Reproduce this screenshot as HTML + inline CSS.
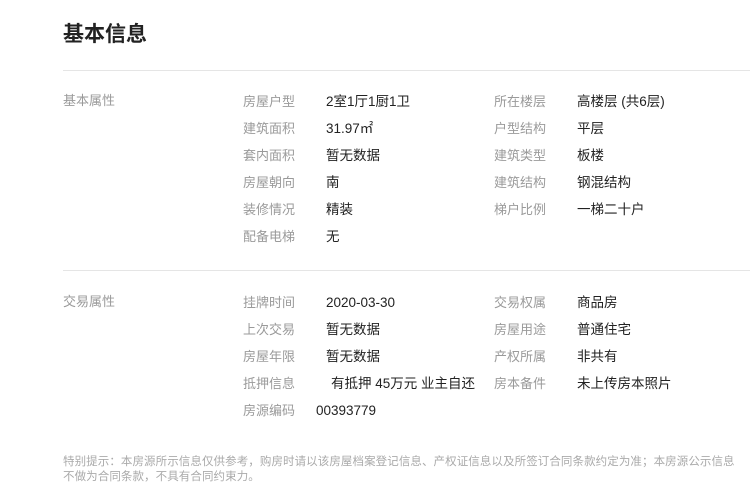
<!DOCTYPE html>
<html><head><meta charset="utf-8"><style>
body{margin:0;width:750px;height:491px;background:#fff;font-family:"Liberation Sans","Noto Sans CJK SC",sans-serif;position:relative;overflow:hidden}
.a{position:absolute;white-space:nowrap;font-size:13px;line-height:16px}
.g{color:#9a9a9a}.d{color:#222;font-size:13.5px}
h1{position:absolute;left:63px;top:20px;margin:0;font-size:21px;font-weight:bold;color:#222;line-height:30px}
.l{position:absolute;left:63px;right:0;height:1px;background:#e5e5e5}
.f{position:absolute;left:63px;font-size:11.5px;color:#aaa;line-height:15px;white-space:nowrap;letter-spacing:0.08px}
</style></head><body>
<h1>基本信息</h1>
<div class="l" style="top:70px"></div>
<div class="a g" style="left:63px;top:93px">基本属性</div>
<div class="a g" style="left:243px;top:94px">房屋户型</div><div class="a d" style="left:326px;top:94px">2室1厅1厨1卫</div>
<div class="a g" style="left:494px;top:94px">所在楼层</div><div class="a d" style="left:577px;top:94px">高楼层 (共6层)</div>
<div class="a g" style="left:243px;top:121px">建筑面积</div><div class="a d" style="left:326px;top:121px">31.97㎡</div>
<div class="a g" style="left:494px;top:121px">户型结构</div><div class="a d" style="left:577px;top:121px">平层</div>
<div class="a g" style="left:243px;top:148px">套内面积</div><div class="a d" style="left:326px;top:148px">暂无数据</div>
<div class="a g" style="left:494px;top:148px">建筑类型</div><div class="a d" style="left:577px;top:148px">板楼</div>
<div class="a g" style="left:243px;top:175px">房屋朝向</div><div class="a d" style="left:326px;top:175px">南</div>
<div class="a g" style="left:494px;top:175px">建筑结构</div><div class="a d" style="left:577px;top:175px">钢混结构</div>
<div class="a g" style="left:243px;top:202px">装修情况</div><div class="a d" style="left:326px;top:202px">精装</div>
<div class="a g" style="left:494px;top:202px">梯户比例</div><div class="a d" style="left:577px;top:202px">一梯二十户</div>
<div class="a g" style="left:243px;top:229px">配备电梯</div><div class="a d" style="left:326px;top:229px">无</div>
<div class="l" style="top:270px"></div>
<div class="a g" style="left:63px;top:294px">交易属性</div>
<div class="a g" style="left:243px;top:295px">挂牌时间</div><div class="a d" style="left:326px;top:295px">2020-03-30</div>
<div class="a g" style="left:494px;top:295px">交易权属</div><div class="a d" style="left:577px;top:295px">商品房</div>
<div class="a g" style="left:243px;top:322px">上次交易</div><div class="a d" style="left:326px;top:322px">暂无数据</div>
<div class="a g" style="left:494px;top:322px">房屋用途</div><div class="a d" style="left:577px;top:322px">普通住宅</div>
<div class="a g" style="left:243px;top:349px">房屋年限</div><div class="a d" style="left:326px;top:349px">暂无数据</div>
<div class="a g" style="left:494px;top:349px">产权所属</div><div class="a d" style="left:577px;top:349px">非共有</div>
<div class="a g" style="left:243px;top:376px">抵押信息</div><div class="a d" style="left:331px;top:376px">有抵押 45万元 业主自还</div>
<div class="a g" style="left:494px;top:376px">房本备件</div><div class="a d" style="left:577px;top:376px">未上传房本照片</div>
<div class="a g" style="left:243px;top:403px">房源编码</div><div class="a d" style="left:316px;top:403px">00393779</div>
<div class="f" style="top:455px">特别提示：本房源所示信息仅供参考，购房时请以该房屋档案登记信息、产权证信息以及所签订合同条款约定为准；本房源公示信息</div>
<div class="f" style="top:470px">不做为合同条款，不具有合同约束力。</div>
</body></html>
